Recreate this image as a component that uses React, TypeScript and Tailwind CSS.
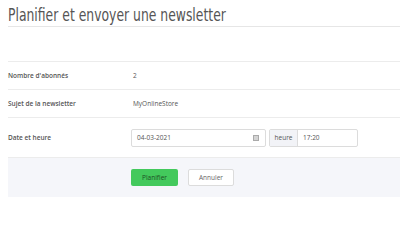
const Row = ({ label, children }: { label: string; children: React.ReactNode }) => (
  <div className="flex items-center h-[28px] border-t border-[#ececec]">
    <div className="w-[123px] text-[#555] font-semibold">{label}</div>
    <div className="flex-1 text-[#555]">{children}</div>
  </div>
);

export default function App() {
  return (
    <div className="w-[400px] h-[228px] bg-white pl-[8px] overflow-hidden" style={{ fontFamily: '"Open Sans", sans-serif' }}>
      <h1
        className="pt-[5px] h-[27px] text-[17px] leading-[20px] text-[#555] border-b border-[#e6e6e6] whitespace-nowrap"
        style={{ fontFamily: '"DejaVu Sans Condensed", sans-serif' }}
      >
        <span className="inline-block origin-left scale-x-[0.81]">Planifier et envoyer une newsletter</span>
      </h1>

      <div className="mt-[34px] text-[6.5px]">
        <Row label="Nombre d'abonnés">
          <span className="pl-[2px]">2</span>
        </Row>
        <Row label="Sujet de la newsletter">
          <span className="pl-[2px]">MyOnlineStore</span>
        </Row>
        <div className="flex items-center h-[40px] border-t border-[#ececec]">
          <div className="w-[123px] text-[#555] font-semibold">Date et heure</div>
          <div className="flex items-center">
            <div className="w-[135px] h-[18px] border border-[#dcdcdc] rounded-[2px] flex items-center justify-between pl-[5px] pr-[6px] text-[#555]">
              <span>04-03-2021</span>
              <span className="w-[6px] h-[6px] bg-[#d4d4d4] border border-[#aaa]" />
            </div>
            <div className="ml-[3px] flex h-[18px] border border-[#dcdcdc] rounded-[2px]">
              <div className="w-[28px] bg-[#f2f3f7] border-r border-[#dcdcdc] flex items-center justify-center text-[#555]">heure</div>
              <div className="w-[59px] flex items-center pl-[5px] text-[#555]">17:20</div>
            </div>
          </div>
        </div>
      </div>

      <div className="h-[40px] bg-[#f5f6fa] border-t border-[#ececec] flex items-center pl-[123px] gap-[10px] text-[6.5px]">
        <button className="w-[47px] h-[17px] bg-[#43c95c] text-[#1d4f24] rounded-[2px]">Planifier</button>
        <button className="w-[46px] h-[17px] bg-white border border-[#dcdcdc] text-[#666] rounded-[2px]">Annuler</button>
      </div>
    </div>
  );
}
